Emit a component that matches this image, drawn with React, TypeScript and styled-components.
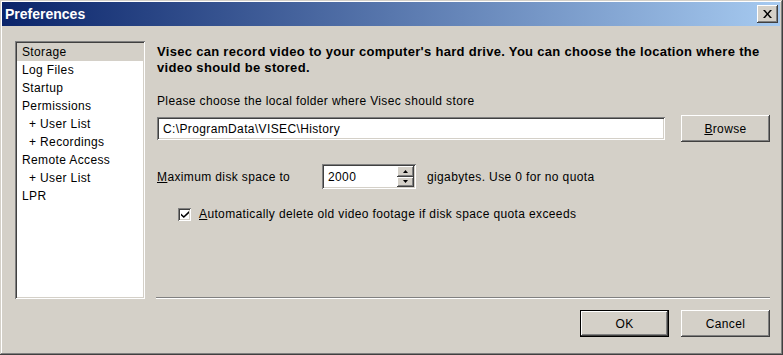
import React from "react";
import styled, { createGlobalStyle, css } from "styled-components";

const Global = createGlobalStyle`
  html, body { margin: 0; padding: 0; background: #d4d0c8; }
  body { font-family: "Liberation Sans", Arial, sans-serif; font-size: 12px; color: #000; letter-spacing: 0.37px; }
  * { box-sizing: border-box; }
`;

const raised = css`
  box-shadow: inset -1px -1px #404040, inset 1px 1px #ffffff,
    inset -2px -2px #808080, inset 2px 2px #d4d0c8;
`;
const sunken = css`
  box-shadow: inset 1px 1px #808080, inset -1px -1px #ffffff,
    inset 2px 2px #404040, inset -2px -2px #d4d0c8;
`;

const Window = styled.div`
  width: 783px;
  height: 355px;
  background: #d4d0c8;
  padding: 2px 3px 3px 2px;
  display: flex;
  flex-direction: column;
  box-shadow: inset -1px -1px #404040, inset 1px 1px #d4d0c8,
    inset -2px -2px #808080, inset 2px 2px #ffffff;
`;

const TitleBar = styled.div`
  height: 24px;
  display: flex;
  align-items: center;
  justify-content: space-between;
  padding: 0 2px 0 3px;
  background: linear-gradient(to right, #0a246a, #a6caf0);
`;

const Title = styled.span`
  color: #fff;
  font-weight: bold;
  font-size: 14px;
  letter-spacing: 0;
`;

const CloseButton = styled.div`
  width: 21px;
  height: 18px;
  background: #d4d0c8;
  ${raised};
  display: flex;
  align-items: center;
  justify-content: center;
`;

const Body = styled.div`
  flex: 1;
  display: grid;
  grid-template-columns: 130px 1fr;
  grid-template-rows: 1fr 27px;
  column-gap: 12px;
  row-gap: 11px;
  padding: 15px 11px 15px 13px;
`;

const List = styled.div`
  grid-row: 1;
  grid-column: 1;
  background: #fff;
  ${sunken};
  padding: 2px;
`;

const ListItem = styled.div<{ $indent?: boolean; $selected?: boolean }>`
  height: 18px;
  line-height: 18px;
  padding-left: ${(p) => (p.$indent ? "12px" : "5px")};
  background: ${(p) => (p.$selected ? "#d4d0c8" : "transparent")};
  white-space: pre;
`;

const Content = styled.div`
  grid-row: 1;
  grid-column: 2;
  display: flex;
  flex-direction: column;
`;

const Heading = styled.div`
  margin-top: 3px;
  font-weight: bold;
  font-size: 13px;
  letter-spacing: 0.3px;
  line-height: 16px;
`;

const Prompt = styled.div`
  margin-top: 17px;
  line-height: 16px;
`;

const PathRow = styled.div`
  margin-top: 6px;
  display: flex;
  align-items: center;
  gap: 16px;
  height: 27px;
`;

const TextField = styled.div<{ $width: number }>`
  width: ${(p) => p.$width}px;
  height: 23px;
  background: #fff;
  ${sunken};
  padding: 0 6px;
  display: flex;
  align-items: center;
`;

const Button = styled.div<{ $default?: boolean }>`
  width: 89px;
  height: 27px;
  background: #d4d0c8;
  display: flex;
  align-items: center;
  justify-content: center;
  ${(p) =>
    p.$default
      ? css`
          box-shadow: inset 0 0 0 1px #000, inset -2px -2px #404040,
            inset 2px 2px #ffffff, inset -3px -3px #808080;
        `
      : raised};
`;

const QuotaRow = styled.div`
  margin-top: 22px;
  display: flex;
  align-items: center;
  height: 25px;
`;

const QuotaLabel = styled.span`
  width: 165px;
`;

const Spin = styled.div`
  width: 94px;
  height: 25px;
  background: #fff;
  ${sunken};
  padding: 2px 2px 2px 6px;
  display: flex;
  align-items: center;
  justify-content: space-between;
`;

const SpinButtons = styled.div`
  display: flex;
  flex-direction: column;
  width: 17px;
  height: 21px;
`;

const SpinButton = styled.div`
  flex: 1;
  background: #d4d0c8;
  ${raised};
  display: flex;
  align-items: center;
  justify-content: center;
`;

const QuotaHint = styled.span`
  margin-left: 11px;
`;

const CheckRow = styled.div`
  margin-top: 17px;
  padding-left: 21px;
  display: flex;
  align-items: center;
  gap: 8px;
  height: 16px;
`;

const CheckBox = styled.div`
  width: 13px;
  height: 13px;
  background: #fff;
  ${sunken};
  display: flex;
  align-items: center;
  justify-content: center;
`;

const Separator = styled.div`
  margin-top: auto;
  margin-left: -1px;
  height: 2px;
  border-top: 1px solid #808080;
  border-bottom: 1px solid #ffffff;
`;

const Footer = styled.div`
  grid-row: 2;
  grid-column: 2;
  display: flex;
  justify-content: flex-end;
  gap: 12px;
`;

const items: { label: string; indent?: boolean }[] = [
  { label: "Storage" },
  { label: "Log Files" },
  { label: "Startup" },
  { label: "Permissions" },
  { label: "+ User List", indent: true },
  { label: "+ Recordings", indent: true },
  { label: "Remote Access" },
  { label: "+ User List", indent: true },
  { label: "LPR" },
];

export default function App() {
  return (
    <>
      <Global />
      <Window>
        <TitleBar>
          <Title>Preferences</Title>
          <CloseButton>
            <svg width="9" height="8" viewBox="0 0 9 8">
              <path d="M0 0h2l2.5 3 2.5-3h2L5.5 4 9 8H7L4.5 5 2 8H0l3.5-4z" fill="#000" />
            </svg>
          </CloseButton>
        </TitleBar>
        <Body>
          <List>
            {items.map((it, i) => (
              <ListItem key={i} $indent={it.indent} $selected={i === 0}>
                {it.label}
              </ListItem>
            ))}
          </List>
          <Content>
            <Heading>
              Visec can record video to your computer's hard drive. You can choose the location where the
              <br />
              video should be stored.
            </Heading>
            <Prompt>Please choose the local folder where Visec should store</Prompt>
            <PathRow>
              <TextField $width={508}>C:\ProgramData\VISEC\History</TextField>
              <Button>
                <span>
                  <u>B</u>rowse
                </span>
              </Button>
            </PathRow>
            <QuotaRow>
              <QuotaLabel>
                <u>M</u>aximum disk space to
              </QuotaLabel>
              <Spin>
                <span>2000</span>
                <SpinButtons>
                  <SpinButton>
                    <svg width="5" height="3" viewBox="0 0 5 3">
                      <path d="M2.5 0L5 3H0z" fill="#000" />
                    </svg>
                  </SpinButton>
                  <SpinButton>
                    <svg width="5" height="3" viewBox="0 0 5 3">
                      <path d="M0 0h5L2.5 3z" fill="#000" />
                    </svg>
                  </SpinButton>
                </SpinButtons>
              </Spin>
              <QuotaHint>gigabytes. Use 0 for no quota</QuotaHint>
            </QuotaRow>
            <CheckRow>
              <CheckBox>
                <svg width="8" height="7" viewBox="0 0 8 7">
                  <path d="M0 2.5l2.8 2.6L8 0v2.3L2.8 7 0 4.6z" fill="#000" />
                </svg>
              </CheckBox>
              <span>
                <u>A</u>utomatically delete old video footage if disk space quota exceeds
              </span>
            </CheckRow>
            <Separator />
          </Content>
          <Footer>
            <Button $default>OK</Button>
            <Button>Cancel</Button>
          </Footer>
        </Body>
      </Window>
    </>
  );
}
